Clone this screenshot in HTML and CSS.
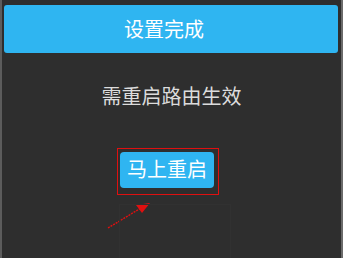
FILE: index.html
```html
<!DOCTYPE html>
<html lang="zh">
<head>
<meta charset="utf-8">
<link rel="stylesheet" href="styles.css">
</head>
<body>
<div class="frame">
  <div class="header"><span class="title">设置完成</span></div>
  <p class="msg">需重启路由生效</p>
  <div class="btn-row">
    <div class="btn-wrap">
      <button class="btn">马上重启</button>
      <div class="highlight"></div>
    </div>
  </div>
  <svg class="arrow" width="60" height="40" viewBox="0 0 60 40">
    <line x1="2" y1="36" x2="35" y2="16" stroke="#e01010" stroke-width="1.4" stroke-dasharray="2 1"/>
    <polygon points="44,11 30,13 36,21" fill="#e01010"/>
  </svg>
  <div class="ghost"></div>
</div>
</body>
</html>
```
FILE: styles.css
```css
html, body {
  margin: 0;
  padding: 0;
  background: #2e2e2e;
}
.frame {
  position: relative;
  box-sizing: border-box;
  width: 343px;
  height: 258px;
  background: #2e2e2e;
  border-left: 2px solid #5c5c5c;
  border-right: 2px solid #6a6a6a;
  padding-top: 5px;
  font-family: "Noto Sans CJK SC", "Noto Sans", sans-serif;
  overflow: hidden;
}
.header {
  margin: 0 3px 0 2px;
  height: 48px;
  background: #2fb5f1;
  border-radius: 3px;
  display: flex;
  align-items: center;
  justify-content: center;
  padding-right: 14px;
}
.title {
  color: #ffffff;
  font-size: 20px;
  line-height: 24px;
}
.msg {
  margin: 31px 0 0 0;
  text-align: center;
  color: #dcdcdc;
  font-size: 20px;
  line-height: 24px;
}
.btn-row {
  margin-top: 44px;
  padding-left: 118px;
  display: flex;
}
.btn-wrap {
  position: relative;
}
.btn {
  display: block;
  width: 94px;
  height: 36px;
  border: 0;
  border-radius: 4px;
  background: #2fb5f1;
  color: #ffffff;
  font-family: "Noto Sans CJK SC", "Noto Sans", sans-serif;
  font-size: 20px;
  line-height: 24px;
  padding: 0 0 2px 0;
}
.highlight {
  position: absolute;
  left: -3px;
  top: -4px;
  right: -5px;
  bottom: -7px;
  border: 1px solid #e01010;
}
.arrow {
  position: absolute;
  left: 104px;
  top: 192px;
}
.ghost {
  position: absolute;
  left: 117px;
  top: 204px;
  width: 110px;
  height: 60px;
  border: 1px solid #313131;
}
```
